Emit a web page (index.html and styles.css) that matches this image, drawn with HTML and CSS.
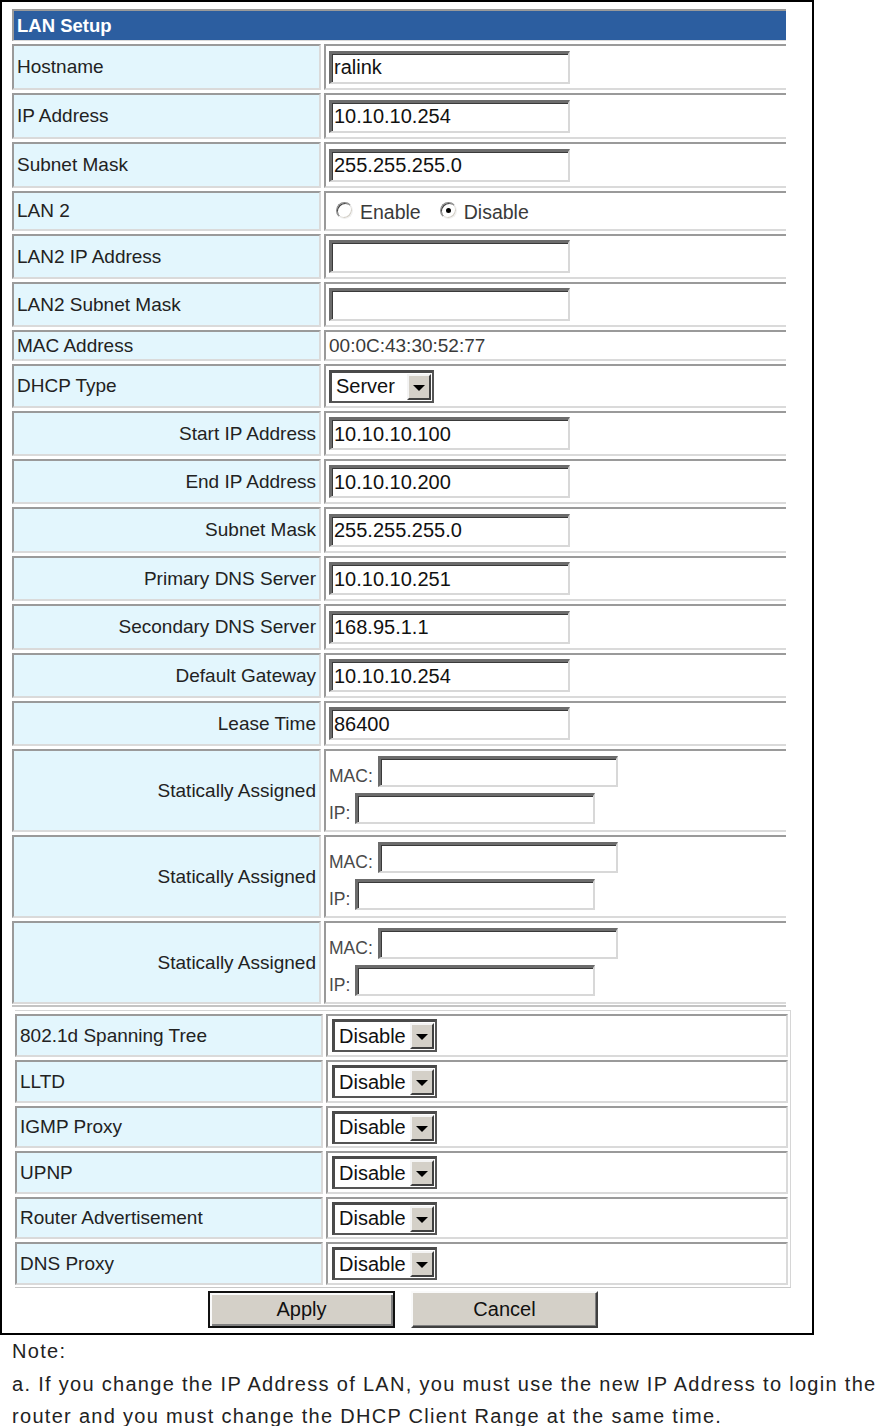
FILE: index.html
```html
<!DOCTYPE html>
<html>
<head>
<meta charset="utf-8">
<title>LAN Setup</title>
<link rel="stylesheet" href="styles.css">
</head>
<body>
<div class="frame">
  <div class="grid1">
    <div class="cell head">LAN Setup</div>

    <div class="cell lab">Hostname</div>
    <div class="cell val"><input class="txt" type="text" value="ralink"></div>

    <div class="cell lab">IP Address</div>
    <div class="cell val"><input class="txt" type="text" value="10.10.10.254"></div>

    <div class="cell lab">Subnet Mask</div>
    <div class="cell val"><input class="txt" type="text" value="255.255.255.0"></div>

    <div class="cell lab">LAN 2</div>
    <div class="cell val radios">
      <span class="radio"></span><span class="rtext">Enable</span>
      <span class="radio on"></span><span class="rtext">Disable</span>
    </div>

    <div class="cell lab">LAN2 IP Address</div>
    <div class="cell val"><input class="txt" type="text" value=""></div>

    <div class="cell lab">LAN2 Subnet Mask</div>
    <div class="cell val"><input class="txt" type="text" value=""></div>

    <div class="cell lab">MAC Address</div>
    <div class="cell val"><span class="mac">00:0C:43:30:52:77</span></div>

    <div class="cell lab">DHCP Type</div>
    <div class="cell val"><div class="sel"><span class="seltext">Server</span><span class="arr"></span></div></div>

    <div class="cell lab right">Start IP Address</div>
    <div class="cell val"><input class="txt" type="text" value="10.10.10.100"></div>

    <div class="cell lab right">End IP Address</div>
    <div class="cell val"><input class="txt" type="text" value="10.10.10.200"></div>

    <div class="cell lab right">Subnet Mask</div>
    <div class="cell val"><input class="txt" type="text" value="255.255.255.0"></div>

    <div class="cell lab right">Primary DNS Server</div>
    <div class="cell val"><input class="txt" type="text" value="10.10.10.251"></div>

    <div class="cell lab right">Secondary DNS Server</div>
    <div class="cell val"><input class="txt" type="text" value="168.95.1.1"></div>

    <div class="cell lab right">Default Gateway</div>
    <div class="cell val"><input class="txt" type="text" value="10.10.10.254"></div>

    <div class="cell lab right">Lease Time</div>
    <div class="cell val"><input class="txt" type="text" value="86400"></div>

    <div class="cell lab right">Statically Assigned</div>
    <div class="cell val static">
      <div class="sline"><span class="slab">MAC:</span><input class="txt small" type="text" value=""></div>
      <div class="sline"><span class="slab">IP:</span><input class="txt small" type="text" value=""></div>
    </div>

    <div class="cell lab right">Statically Assigned</div>
    <div class="cell val static">
      <div class="sline"><span class="slab">MAC:</span><input class="txt small" type="text" value=""></div>
      <div class="sline"><span class="slab">IP:</span><input class="txt small" type="text" value=""></div>
    </div>

    <div class="cell lab right">Statically Assigned</div>
    <div class="cell val static">
      <div class="sline"><span class="slab">MAC:</span><input class="txt small" type="text" value=""></div>
      <div class="sline"><span class="slab">IP:</span><input class="txt small" type="text" value=""></div>
    </div>
  </div>

  <div class="grid2">
    <div class="cell lab2">802.1d Spanning Tree</div>
    <div class="cell val2"><div class="sel"><span class="seltext">Disable</span><span class="arr"></span></div></div>

    <div class="cell lab2">LLTD</div>
    <div class="cell val2"><div class="sel"><span class="seltext">Disable</span><span class="arr"></span></div></div>

    <div class="cell lab2">IGMP Proxy</div>
    <div class="cell val2"><div class="sel"><span class="seltext">Disable</span><span class="arr"></span></div></div>

    <div class="cell lab2">UPNP</div>
    <div class="cell val2"><div class="sel"><span class="seltext">Disable</span><span class="arr"></span></div></div>

    <div class="cell lab2">Router Advertisement</div>
    <div class="cell val2"><div class="sel"><span class="seltext">Disable</span><span class="arr"></span></div></div>

    <div class="cell lab2">DNS Proxy</div>
    <div class="cell val2"><div class="sel"><span class="seltext">Disable</span><span class="arr"></span></div></div>
  </div>

  <div class="btns">
    <button class="btn def" type="button">Apply</button>
    <button class="btn" type="button">Cancel</button>
  </div>
</div>

<div class="note">
  <div class="nline">Note:</div>
  <div class="nline">a. If you change the IP Address of LAN, you must use the new IP Address to login the</div>
  <div class="nline">router and you must change the DHCP Client Range at the same time.</div>
</div>
</body>
</html>
```

FILE: styles.css
```css
html {
  overflow: hidden;
}
body {
  margin: 0;
  background: #fff;
  font-family: "Liberation Sans", Arial, sans-serif;
  color: #222;
}
.frame {
  box-sizing: border-box;
  width: 814px;
  border: 2px solid #000;
  padding: 7px 0 5px 10px;
}
.grid1 {
  display: grid;
  grid-template-columns: 309px 462px;
  grid-template-rows: 32px 46px 46px 46px 40px 45px 45px 31px 44px 45px 45px 46px 45px 46px 45px 45px 83px 83px 83px;
  column-gap: 3px;
  row-gap: 3px;
  width: 774px;
  padding-bottom: 1px;
  border-bottom: 2px solid #c4c4c4;
}
.cell {
  box-sizing: border-box;
  border-style: solid;
  border-width: 2px;
  border-color: #9a9a9a #dadada #dadada #9a9a9a;
  display: flex;
  align-items: center;
  font-size: 19px;
  white-space: nowrap;
}
.head {
  grid-column: 1 / 3;
  background: #2c5ea0;
  color: #fff;
  font-weight: bold;
  font-size: 18.5px;
  padding-left: 3px;
  border-right: none;
  border-bottom-width: 1px;
}
.lab {
  background: #e3f6fd;
  padding: 0 3px;
}
.lab.right {
  justify-content: flex-end;
}
.val {
  background: #fff;
  padding-left: 3px;
  border-right: none;
}
.txt {
  box-sizing: border-box;
  width: 241px;
  height: 33px;
  margin: 0;
  padding: 0 2px;
  font-family: "Liberation Sans", Arial, sans-serif;
  font-size: 20px;
  color: #111;
  background: #fff;
  border-style: solid;
  border-width: 3px 2px 2px 3px;
  border-color: #6c6c6c #d8d8d8 #d8d8d8 #6c6c6c;
  box-shadow: inset 1px 1px 0 #3a3a3a;
  outline: none;
}
.txt.small {
  width: 240px;
  height: 31px;
}
.radios {
  padding-left: 10px;
  padding-top: 2px;
}
.radio {
  box-sizing: border-box;
  position: relative;
  display: inline-block;
  width: 17px;
  height: 17px;
  border-radius: 50%;
  border: 1px solid;
  border-color: #8a8a8a #f0f0f0 #f0f0f0 #8a8a8a;
  box-shadow: inset 1px 1px 0 #454545, inset -1px -1px 0 #d4d0c8;
  background: #fff;
  margin-top: -4px;
}
.radio.on::after {
  content: "";
  position: absolute;
  left: 5px;
  top: 5px;
  width: 5px;
  height: 5px;
  border-radius: 50%;
  background: #000;
}
.rtext {
  font-size: 19.5px;
  color: #3a3a3a;
  margin-left: 7px;
  margin-right: 19px;
}
.mac {
  color: #3a3a3a;
}
.sel {
  box-sizing: border-box;
  display: flex;
  align-items: stretch;
  width: 105px;
  height: 33px;
  background: #fff;
  border-style: solid;
  border-width: 3px 2px 2px 3px;
  border-color: #4a4a4a #555 #555 #4a4a4a;
}
.seltext {
  flex: 1;
  display: flex;
  align-items: center;
  padding-left: 4px;
  font-size: 20px;
  color: #111;
}
.arr {
  box-sizing: border-box;
  position: relative;
  width: 24px;
  margin: 1px;
  background: #d4d0c8;
  border-style: solid;
  border-width: 2px;
  border-color: #f4f4f4 #404040 #404040 #f4f4f4;
}
.arr::after {
  content: "";
  position: absolute;
  left: 4px;
  top: 9px;
  border-left: 6px solid transparent;
  border-right: 6px solid transparent;
  border-top: 6px solid #000;
}
.static {
  flex-direction: column;
  align-items: flex-start;
  justify-content: center;
  row-gap: 6px;
  padding-bottom: 2px;
}
.sline {
  display: flex;
  align-items: center;
}
.slab {
  font-size: 17.5px;
  color: #4a4a4a;
  margin-right: 5px;
  padding-top: 10px;
}
.grid2 {
  display: grid;
  grid-template-columns: 308px 462px;
  grid-template-rows: 43px 43px 42px 43px 42px 43px;
  column-gap: 3px;
  row-gap: 3px;
  width: 773px;
  margin: 3px 0 0 3px;
  padding: 3px 2px 2px 0;
  border-top: 1px solid #d6d6d6;
  border-right: 1px solid #d6d6d6;
  border-bottom: 1px solid #c8c8c8;
}
.lab2 {
  background: #e3f6fd;
  padding: 0 3px;
}
.val2 {
  background: #fff;
  padding-left: 4px;
}
.btns {
  display: flex;
  justify-content: center;
  column-gap: 16px;
  width: 776px;
  margin: 3px 0 0 3px;
}
.btn {
  box-sizing: border-box;
  width: 187px;
  height: 37px;
  margin: 0;
  padding: 0;
  font-family: "Liberation Sans", Arial, sans-serif;
  font-size: 20px;
  color: #111;
  background: #d4d0c8;
  border-style: solid;
  border-width: 2px;
  border-color: #fafafa #404040 #404040 #fafafa;
  box-shadow: inset -1px -1px 0 #808080;
}
.btn.def {
  border: 2px solid #111;
  box-shadow: inset 2px 2px 0 #fafafa, inset -2px -2px 0 #808080;
}
.note {
  padding-left: 12px;
  font-size: 20px;
  line-height: 32.5px;
  letter-spacing: 1.3px;
  color: #222;
}
.nline {
  white-space: nowrap;
}
```
